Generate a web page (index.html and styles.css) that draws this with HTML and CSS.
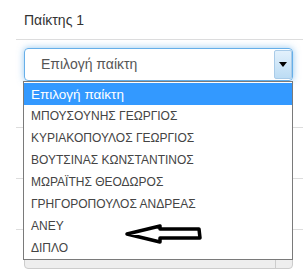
FILE: index.html
```html
<!DOCTYPE html>
<html lang="el">
<head>
    <meta charset="UTF-8">
    <meta name="viewport" content="width=device-width, initial-scale=1.0">
    <title>Παίκτες</title>
    <link rel="stylesheet" href="styles.css">
</head>
<body>
    <div class="panel">
        <div class="panel-title">Παίκτης 1</div>

        <div class="select-wrap">
            <div class="select focus">
                <span class="select-text">Επιλογή παίκτη</span>
                <span class="select-btn">
                    <svg width="8" height="5" viewBox="0 0 8 5"><path d="M0 0 H8 L4 5 Z" fill="#000"/></svg>
                </span>
            </div>
            <ul class="options">
                <li class="active">Επιλογή παίκτη</li>
                <li>ΜΠΟΥΣΟΥΝΗΣ ΓΕΩΡΓΙΟΣ</li>
                <li>ΚΥΡΙΑΚΟΠΟΥΛΟΣ ΓΕΩΡΓΙΟΣ</li>
                <li>ΒΟΥΤΣΙΝΑΣ ΚΩΝΣΤΑΝΤΙΝΟΣ</li>
                <li>ΜΩΡΑΪΤΗΣ ΘΕΟΔΩΡΟΣ</li>
                <li>ΓΡΗΓΟΡΟΠΟΥΛΟΣ ΑΝΔΡΕΑΣ</li>
                <li>ΑΝΕΥ</li>
                <li>ΔΙΠΛΟ</li>
            </ul>
        </div>

        <div class="divider first"></div>
        <div class="divider"></div>
        <div class="divider"></div>

        <div class="select disabled">
            <span class="select-text">ΜΠΟΥΣΟΥΝΗΣ ΓΕΩΡΓΙΟΣ</span>
            <span class="select-btn"></span>
        </div>
    </div>

    <!-- hand drawn marker -->
    <svg class="marker" width="84" height="24" viewBox="0 0 84 24">
        <path d="M5 11 L38 3 L38 6 L77 6 L78 15 L38 15 L38 19 Z" fill="none" stroke="#000" stroke-width="3.5" stroke-linejoin="round"/>
    </svg>
</body>
</html>
```

FILE: styles.css
```css
body {
    margin: 0;
    background: #fff;
    font-family: "Liberation Sans", Arial, sans-serif;
    color: #333;
    position: relative;
}

.panel {
    margin-left: 16px;
}

.panel-title {
    height: 39px;
    line-height: 40px;
    padding-left: 8px;
    font-size: 14px;
    border-bottom: 1px solid #ddd;
}

.select-wrap {
    position: relative;
    margin: 8px 10px 0 8px;
}

.select {
    display: flex;
    align-items: stretch;
    height: 33px;
    box-sizing: border-box;
    border: 1px solid #ccc;
    border-radius: 4px;
    font-size: 14px;
}

.select-text {
    flex: 1;
    padding-left: 16px;
    line-height: 31px;
    color: #555;
    white-space: nowrap;
    overflow: hidden;
}

.select-btn {
    width: 16px;
    display: flex;
    align-items: center;
    justify-content: center;
}

.select.focus {
    border-color: #66afe9;
    box-shadow: 0 0 7px rgba(102, 175, 233, 0.7);
}

.select.focus .select-btn {
    margin: 1px 0;
    border: 1px solid #a9cbe8;
    border-radius: 2px;
    background: linear-gradient(#e3f1fc, #bcdcf4);
}

.options {
    position: absolute;
    top: 33px;
    left: -1px;
    right: 0;
    margin: 0;
    padding: 1px 0 0;
    list-style: none;
    background: #fff;
    border: 1px solid #7a7a7a;
    font-size: 12px;
    color: #444;
    z-index: 2;
}

.options li {
    height: 22px;
    line-height: 23px;
    padding-left: 7px;
    white-space: nowrap;
}

.options li.active {
    background: #3399ff;
    color: #fff;
    font-size: 13.5px;
}

.divider {
    height: 1px;
    background: #ddd;
    margin-top: 50px;
}

.divider.first {
    margin-top: 46px;
}

.select.disabled {
    margin: 14px 10px 0 8px;
    height: 25px;
    background: #eee;
    border-radius: 0 0 4px 4px;
    font-size: 13px;
}

.select.disabled .select-text {
    line-height: 14px;
    padding-left: 19px;
}

.select.disabled .select-btn {
    border-left: 1px solid #ccc;
}

.marker {
    position: absolute;
    left: 122px;
    top: 223px;
    z-index: 3;
}
```
